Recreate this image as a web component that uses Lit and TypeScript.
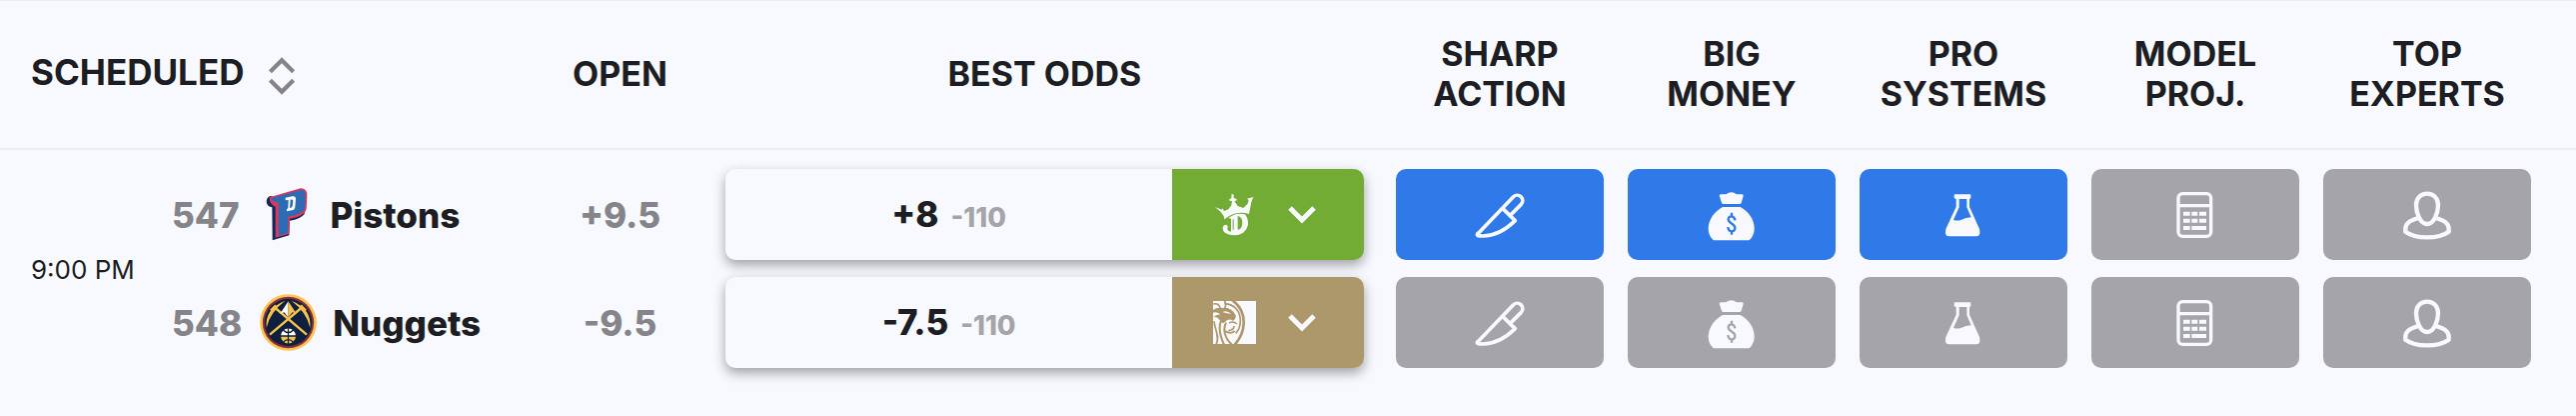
import { LitElement, html, css, svg, nothing } from "lit";
import { customElement, property } from "lit/decorators.js";

type SignalKind = "sharp" | "money" | "systems" | "model" | "experts";

interface TeamLine {
  rotation: number;
  team: string;
  open: string;
  spread: string;
  juice: string;
  book: "draftkings" | "betmgm";
  signals: SignalKind[];
}

const SIGNALS: { kind: SignalKind; title: [string, string] }[] = [
  { kind: "sharp", title: ["SHARP", "ACTION"] },
  { kind: "money", title: ["BIG", "MONEY"] },
  { kind: "systems", title: ["PRO", "SYSTEMS"] },
  { kind: "model", title: ["MODEL", "PROJ."] },
  { kind: "experts", title: ["TOP", "EXPERTS"] },
];

const LINES: TeamLine[] = [
  { rotation: 547, team: "Pistons", open: "+9.5", spread: "+8", juice: "-110", book: "draftkings", signals: ["sharp", "money", "systems"] },
  { rotation: 548, team: "Nuggets", open: "-9.5", spread: "-7.5", juice: "-110", book: "betmgm", signals: [] },
];

const BOOK_NAMES = { draftkings: "DraftKings", betmgm: "BetMGM" };

const signalIcons = {
  sharp: {
    box: "103 71 156 156",
    art: svg`<g fill="none" stroke="currentColor" stroke-width="11" stroke-linejoin="round" stroke-linecap="round">
      <path d="M115 205 L221 95 A15.500 15.500 0 0 1 245 117 L212 150"/>
      <path d="M190 130 L227 166 C196 196 165 212 131 212 C114 212 110 210 115 205"/>
    </g>`,
  },
  money: {
    box: "799 71 156 156",
    art: svg`<path fill="currentColor" d="M840 91 Q840 87 846 87 H860 Q876 75 892 87 H908 Q913 87 912 92 L906 112 Q905 116 901 116 H852 Q848 116 847 112Z"/>
      <path fill="currentColor" d="M850 125 H903 C926 138 945 160 945 190 C945 207 937 218 929 225 H823 C815 218 807 208 807 188 C808 160 827 138 850 125Z"/>
      <path fill="none" stroke="var(--chip)" stroke-width="7" d="M887 165 C885 150 867 150 867 162 C867 176 887 173 887 188 C887 202 867 202 866 185 M877 142 V153 M877 198 V208"/>`,
  },
  systems: {
    box: "-22 -16 156 156",
    art: svg`<path fill="currentColor" fill-rule="evenodd" d="M31 0 H75 Q78 0 78 3 V11 Q78 13 74 14 V37 L104 104 Q109 126 96 126 H11 Q-2 126 3 104 L34 37 V14 Q28 13 28 10 V3 Q28 0 31 0Z M43 14 V39 L26 76 Q36 81 50 76 Q62 70 79 69 L66 39 V14Z"/>`,
  },
  model: {
    box: "-22 -9 156 156",
    art: svg`<g fill="none" stroke="currentColor" stroke-width="10">
        <rect x="5" y="5" width="98" height="128" rx="13"/>
        <path d="M5 41 H103"/>
      </g>
      <path fill="currentColor" d="M20 59h20v12h-20z M45 59h18v12h-18z M68 59h21v12h-21z M20 80h20v12h-20z M45 80h18v12h-18z M68 80h21v12h-21z M20 102h20v12h-20z M45 102h44v12h-44z"/>`,
  },
  experts: {
    box: "-6 -7 156 156",
    art: svg`<g fill="none" stroke="currentColor" stroke-width="13" stroke-linejoin="round">
      <path d="M72 7 C52 7 39 21 39 42 C39 66 52 98 72 98 C92 98 105 66 105 42 C105 21 92 7 72 7Z"/>
      <path d="M46 80 Q7 90 7 112 V121 Q30 138 72 138 Q114 138 137 121 V112 Q137 90 98 80"/>
    </g>`,
  },
};

const teamLogos: Record<string, unknown> = {
  Pistons: svg`<svg class="logo" viewBox="54 50 171 171" aria-hidden="true">
    <path fill="#14275a" d="M92 80 Q80 84 80 97 Q82 112 97 114 L98 213 L148 198 L150 154 Q182 150 194 134 L198 110Z"/>
    <path fill="#d83a5b" d="M89 84 L182 57 Q203 56 202 80 L200 118 Q195 141 150 148 L148 193 L107 205 V112 Q89 106 89 84Z"/>
    <path fill="#2b6cb5" d="M94 87 L183 62 Q197 61 197 80 L195 117 Q190 136 145 142 L144 190 L116 199 V99 Q98 100 94 87Z"/>
    <path fill="#fff" fill-rule="evenodd" d="M137 85 L158 81 Q168 80 168 89 L166 113 Q165 122 157 123 L141 126 V119 L145 117 L146 92 L137 93Z M152 91 L150 116 Q157 116 158 110 L160 94 Q159 90 152 91Z"/>
  </svg>`,
  Nuggets: svg`<svg class="logo" viewBox="64 373 171 171" aria-hidden="true">
    <circle cx="149.500" cy="458.500" r="85" fill="#f9c451"/>
    <circle cx="149.500" cy="458.500" r="77" fill="#8a2f3a"/>
    <circle cx="149.500" cy="458.500" r="71" fill="#0f203f"/>
    <path stroke="#f6c24c" stroke-width="7" d="M94 495 L192 412 M205 495 L107 412"/>
    <path fill="#f6c24c" d="M84 474 Q78 418 140 393 Q94 428 84 474Z M215 474 Q221 418 159 393 Q205 428 215 474Z"/>
    <path stroke="#f6c24c" stroke-width="10" d="M98 424 L113 408 M201 424 L186 408"/>
    <path fill="#fff" d="M149.500 395 L125 432 L137 428 L149.500 443Z"/>
    <path fill="#f6c24c" d="M149.500 395 L174 432 L162 428 L149.500 443Z"/>
    <path fill="#fff" d="M127 499 A22.500 22.500 0 0 1 172 499Z"/>
    <path fill="#f6c24c" d="M127 499 A22.500 22.500 0 0 0 172 499Z"/>
    <path fill="none" stroke="#0f203f" stroke-width="4" d="M149.500 476 V523 M127 499 H172 M134 481 Q149.500 497 165 481 M134 518 Q149.500 502 165 518"/>
  </svg>`,
};

const bookLogos = {
  draftkings: svg`<svg class="book-logo" viewBox="131 101 129 129" aria-hidden="true">
    <path fill="currentColor" d="M137 143 L146 147 L157 151 L159 147 L164 155 L177 150 L186 138 L188 125 L180 124 L180 119 L186 117 L187 103 L193 106 L193 116 L202 119 L201 124 L195 125 L205 140 L222 146 L235 133 L238 122 L233 118 L252 113 L246 128 L239 164 Q197 152 165 180 L163 170 L152 156Z"/>
    <path fill="currentColor" fill-rule="evenodd" d="M177 176 Q200 158 227 165 Q237 178 236 196 Q230 227 192 228 Q160 226 160 207 Q160 196 170 196 Q178 199 174 207 Q173 216 185 217 V178Z M205 170 V211 Q218 210 219 190 Q219 172 205 170Z M190 180 V211 H193 V180Z"/>
  </svg>`,
  betmgm: svg`<svg class="book-logo" viewBox="130 423 129 129" aria-hidden="true">
    <rect x="130" y="423" width="129" height="129" fill="currentColor"/>
    <g fill="none" stroke="var(--book)">
      <path stroke-width="8" d="M186 419 C212 438 223 462 222 489 C221 517 210 538 195 554"/>
      <path stroke-width="5" d="M164 431 C196 432 212 456 212 482 C212 500 206 512 198 520"/>
      <path stroke-width="5" d="M164 421 Q172 435 164 446 M131 432 Q147 428 151 444"/>
      <path stroke-width="5" d="M139 554 C152 530 134 506 133 484"/>
      <path stroke-width="6" d="M163 554 C152 530 144 506 154 482"/>
      <path stroke-width="6" d="M187 554 C166 536 158 510 169 488"/>
      <path stroke-width="5" d="M166 513 Q182 524 195 513 M176 512 Q193 510 193 498"/>
      <path stroke-width="4" d="M178 489 Q190 482 202 492"/>
    </g>
    <path fill="var(--book)" d="M130 450 Q142 441 160 444 Q184 440 198 466 Q199 478 190 482 Q176 474 166 486 Q156 494 148 478 Q140 468 130 472 Q138 464 152 463 Q140 454 130 458Z"/>
    <path fill="currentColor" d="M158 456 Q172 450 184 462 Q170 460 158 456Z"/>
  </svg>`,
};

@customElement("signal-chip")
export class SignalChip extends LitElement {
  @property() kind: SignalKind = "sharp";
  @property() label = "";
  @property({ type: Boolean }) active = false;

  static styles = css`
    :host {
      display: block;
    }
    .chip {
      --chip: #a5a4a9;
      display: flex;
      align-items: center;
      justify-content: center;
      width: 100%;
      height: 91px;
      padding: 0;
      border: 0;
      border-radius: 10px;
      background: var(--chip);
      color: #f7f9fe;
      cursor: pointer;
    }
    .chip.active {
      --chip: #2f7ae8;
    }
    .icon {
      width: 52px;
      height: 52px;
    }
  `;

  render() {
    const icon = signalIcons[this.kind];
    return html`<button class="chip ${this.active ? "active" : ""}" type="button" aria-label=${this.label}>
      <svg class="icon" viewBox=${icon.box} aria-hidden="true">${icon.art}</svg>
    </button>`;
  }
}

@customElement("odds-picker")
export class OddsPicker extends LitElement {
  @property() spread = "";
  @property() juice = "";
  @property() book: "draftkings" | "betmgm" = "draftkings";

  static styles = css`
    :host {
      display: block;
    }
    .picker {
      display: grid;
      grid-template-columns: 7fr 3fr;
      height: 91px;
      border-radius: 10px;
      background: #f7f9fe;
      box-shadow: 0 5px 12px rgba(29, 30, 35, 0.4);
    }
    button {
      border: 0;
      padding: 0;
      font: inherit;
      cursor: pointer;
    }
    .price {
      padding-top: 3px;
      border-radius: 10px 0 0 10px;
      background: none;
      color: #1d1e23;
      font-size: 35px;
      font-weight: 800;
      line-height: 40px;
      text-align: center;
    }
    .juice {
      margin-left: 12px;
      color: #a5a4a9;
      font-size: 27px;
    }
    .book {
      --book: #ac986b;
      display: flex;
      align-items: center;
      justify-content: center;
      gap: 32px;
      padding-right: 8px;
      border-radius: 0 10px 10px 0;
      background: var(--book);
      color: #f7f9fe;
    }
    .book.draftkings {
      --book: #73ac35;
    }
    .book-logo {
      width: 43px;
      height: 43px;
    }
    .chevron {
      width: 28px;
      height: 18px;
    }
  `;

  render() {
    return html`<div class="picker">
      <button class="price" type="button"><span>${this.spread}</span><span class="juice">${this.juice}</span></button>
      <button class="book ${this.book}" type="button" aria-label="${BOOK_NAMES[this.book]}, show other books">
        ${bookLogos[this.book]}
        <svg class="chevron" viewBox="0 0 28 18" aria-hidden="true">
          <path d="M2 2 L14 14 L26 2" fill="none" stroke="currentColor" stroke-width="5" />
        </svg>
      </button>
    </div>`;
  }
}

@customElement("app-root")
export class AppRoot extends LitElement {
  static styles = css`
    :host {
      display: block;
      min-height: 100vh;
      background: #f7f9fe;
      color: #1d1e23;
      font-family: Inter, "Liberation Sans", sans-serif;
    }
    table {
      width: 100%;
      table-layout: fixed;
      border-collapse: separate;
      border-spacing: 0;
    }
    .col-time {
      width: 172px;
    }
    .col-team {
      width: 363px;
    }
    .col-open {
      width: 171px;
    }
    .col-signal {
      width: 9%;
    }
    .col-end {
      width: 33px;
    }
    th {
      box-sizing: border-box;
      height: 150px;
      padding: 0 0 2px;
      border-top: 1px solid #ededf2;
      border-bottom: 2px solid #ededf2;
      font-size: 34px;
      font-weight: 700;
      line-height: 40px;
      text-align: center;
    }
    .scheduled {
      padding-left: 31px;
      font-size: 35px;
      text-align: left;
    }
    .sort {
      padding: 0;
      border: 0;
      background: none;
      color: inherit;
      font: inherit;
      cursor: pointer;
    }
    .sort-icon {
      width: 28px;
      height: 38px;
      margin-left: 24px;
      vertical-align: middle;
      color: #85848a;
    }
    td {
      padding: 9px 12px 8px;
    }
    .first td {
      padding-top: 19px;
    }
    .first .time {
      padding: 14px 0 0 31px;
      font-size: 26px;
      line-height: 32px;
    }
    td.team,
    td.open {
      padding-left: 0;
      padding-right: 0;
      font-size: 35px;
      font-weight: 800;
      line-height: 40px;
    }
    td.odds {
      padding-left: 20px;
      padding-right: 20px;
    }
    .matchup {
      display: flex;
      align-items: center;
    }
    .rotation,
    .open {
      color: #85848a;
    }
    .open {
      text-align: center;
    }
    .logo {
      width: 57px;
      height: 57px;
      margin: 0 16px 0 18px;
    }
  `;

  render() {
    return html`<table>
      <colgroup>
        <col class="col-time" />
        <col class="col-team" />
        <col class="col-open" />
        <col />
        ${SIGNALS.map(() => html`<col class="col-signal" />`)}
        <col class="col-end" />
      </colgroup>
      <thead>
        <tr>
          <th class="scheduled" colspan="2" scope="col">
            <button class="sort" type="button">SCHEDULED<svg class="sort-icon" viewBox="0 0 26 36" aria-hidden="true">
                <path d="M2 14 L13 3 L24 14 M2 22 L13 33 L24 22" fill="none" stroke="currentColor" stroke-width="4" />
              </svg></button>
          </th>
          <th class="open-title" scope="col">OPEN</th>
          <th scope="col">BEST ODDS</th>
          ${SIGNALS.map((s) => html`<th scope="col">${s.title[0]}<br />${s.title[1]}</th>`)}
          <th></th>
        </tr>
      </thead>
      <tbody>
        ${LINES.map(
          (line, i) => html`<tr class=${i === 0 ? "first" : "second"}>
            ${i === 0 ? html`<td class="time" rowspan="2">9:00 PM</td>` : nothing}
            <td class="team">
              <div class="matchup">
                <span class="rotation">${line.rotation}</span>${teamLogos[line.team]}<span>${line.team}</span>
              </div>
            </td>
            <td class="open">${line.open}</td>
            <td class="odds">
              <odds-picker .spread=${line.spread} .juice=${line.juice} .book=${line.book}></odds-picker>
            </td>
            ${SIGNALS.map(
              (s) => html`<td>
                <signal-chip
                  .kind=${s.kind}
                  .label="${s.title.join(" ")}, ${line.team}"
                  .active=${line.signals.includes(s.kind)}
                ></signal-chip>
              </td>`
            )}
            <td></td>
          </tr>`
        )}
      </tbody>
    </table>`;
  }
}
